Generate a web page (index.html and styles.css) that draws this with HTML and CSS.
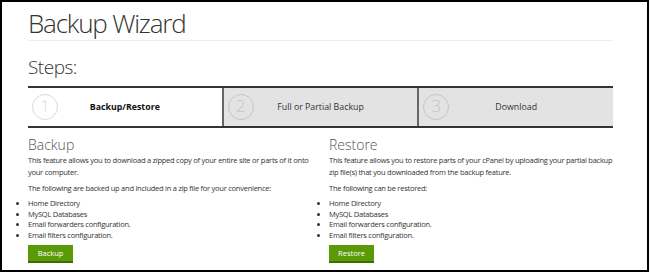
FILE: index.html
```html
<!DOCTYPE html>
<html lang="en">
<head>
    <meta charset="UTF-8">
    <title>Backup Wizard</title>
    <link rel="stylesheet" href="styles.css">
</head>
<body>
    <div class="frame">
        <h1 class="title">Backup Wizard</h1>

        <h2 class="steps-title">Steps:</h2>
        <div class="steps">
            <div class="step active">
                <span class="num">1</span>
                <span class="label">Backup/Restore</span>
            </div>
            <div class="step">
                <span class="num">2</span>
                <span class="label">Full or Partial Backup</span>
            </div>
            <div class="step">
                <span class="num">3</span>
                <span class="label">Download</span>
            </div>
        </div>

        <!-- Backup / Restore columns -->
        <div class="columns">
            <div class="col">
                <h3>Backup</h3>
                <p>This feature allows you to download a zipped copy of your entire site or parts of it onto your computer.</p>
                <p class="sub">The following are backed up and included in a zip file for your convenience:</p>
                <ul>
                    <li>Home Directory</li>
                    <li>MySQL Databases</li>
                    <li>Email forwarders configuration.</li>
                    <li>Email filters configuration.</li>
                </ul>
                <button>Backup</button>
            </div>
            <div class="col">
                <h3>Restore</h3>
                <p>This feature allows you to restore parts of your cPanel by uploading your partial backup zip file(s) that you downloaded from the backup feature.</p>
                <p class="sub">The following can be restored:</p>
                <ul>
                    <li>Home Directory</li>
                    <li>MySQL Databases</li>
                    <li>Email forwarders configuration.</li>
                    <li>Email filters configuration.</li>
                </ul>
                <button>Restore</button>
            </div>
        </div>
    </div>
</body>
</html>
```

FILE: styles.css
```css
/* Genel */
body {
    margin: 0;
    font-family: "Open Sans", "Noto Sans", sans-serif;
    color: #333;
    background: #fff;
}

.frame {
    box-sizing: border-box;
    width: 649px;
    height: 272px;
    border: 2px solid #000;
    padding: 0 34px 0 26px;
    overflow: hidden;
}

/* Basliklar */
.title {
    margin: 0;
    padding-top: 4px;
    font-size: 26px;
    font-weight: 300;
    line-height: 34px;
    letter-spacing: -1.2px;
    color: #333;
    border-bottom: 1px solid #eee;
}

.steps-title {
    margin: 13px 0 0;
    font-size: 19px;
    font-weight: 300;
    line-height: 26px;
    letter-spacing: -0.5px;
    color: #333;
}

/* Adim cubugu */
.steps {
    display: flex;
    margin-top: 6px;
    border-top: 2px solid #333;
    border-bottom: 2px solid #333;
    height: 38px;
}

.step {
    flex: 1;
    display: flex;
    align-items: center;
    position: relative;
    background: #e3e3e3;
    border-left: 2px solid #666;
}

.step.active {
    background: #fff;
    border-left: none;
}

.num {
    position: absolute;
    left: 4px;
    top: 6px;
    box-sizing: border-box;
    width: 26px;
    height: 26px;
    border: 1.5px solid #d2d2d2;
    border-radius: 50%;
    color: #d2d2d2;
    font-size: 17px;
    font-weight: 300;
    line-height: 22px;
    text-align: center;
}

.step .num {
    border-color: #c6c6c6;
    color: #c6c6c6;
}

.step.active .num {
    border-color: #dadada;
    color: #dadada;
}

.label {
    flex: 1;
    text-align: center;
    font-size: 8.8px;
    color: #333;
}

.active .label {
    font-weight: bold;
    color: #111;
}

/* Kolonlar */
.columns {
    display: flex;
    gap: 17px;
    margin-top: 8px;
}

.col {
    flex: 1;
    min-width: 0;
}

.col h3 {
    margin: 0;
    font-size: 14px;
    font-weight: 300;
    line-height: 18px;
    color: #555;
}

.col p {
    margin: 0;
    font-size: 7.5px;
    line-height: 12px;
    letter-spacing: -0.25px;
}

.col p.sub {
    margin-top: 4px;
}

.col ul {
    margin: 4px 0 0;
    padding: 0;
    font-size: 7.5px;
    line-height: 10.6px;
    letter-spacing: -0.25px;
}

/* Buton */
button {
    display: block;
    margin-top: 5px;
    min-width: 45px;
    height: 18px;
    padding: 0 8px;
    background: #5b9a07;
    color: #fff;
    border: none;
    border-bottom: 2px solid #3f6c04;
    font-family: inherit;
    font-size: 7.5px;
    cursor: pointer;
}
```
